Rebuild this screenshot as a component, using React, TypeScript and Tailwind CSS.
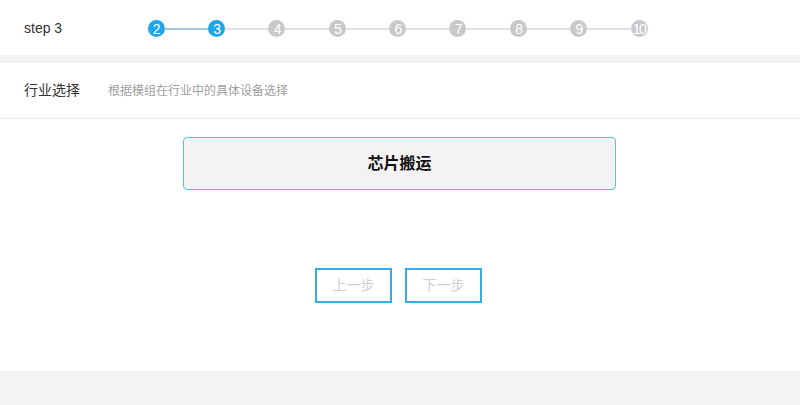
import React from "react";

const steps = ["2", "3", "4", "5", "6", "7", "8", "9", "10"];

export default function App() {
  return (
    <div
      className="w-[800px] h-[405px] bg-[#f3f3f3] flex flex-col"
      style={{ fontFamily: '"Liberation Sans", "Noto Sans CJK SC", sans-serif' }}
    >
      <div className="h-[55px] bg-white flex items-center shrink-0">
        <div className="w-[147.5px] pl-[24px] text-[14px] text-[#333] pt-[1px]">step 3</div>
        <div className="flex items-center pt-[2px]">
          {steps.map((s, i) => {
            const active = i < 2;
            return (
              <React.Fragment key={s}>
                {i > 0 && (
                  <div
                    className={
                      i === 1
                        ? "w-[43.4px] h-[2px] bg-[#9fcbd6]"
                        : "w-[43.4px] h-[2px] bg-[#e0e0e0]"
                    }
                  />
                )}
                <div
                  className={
                    (active ? "bg-[#1ea6ea] " : "bg-[#c9c9c9] ") +
                    "w-[17px] h-[17px] rounded-full flex items-center justify-center text-white text-[14px] leading-none tracking-[-1.5px]"
                  }
                >
                  {s}
                </div>
              </React.Fragment>
            );
          })}
        </div>
      </div>
      <div className="mt-[8px] bg-white h-[308px] flex flex-col shrink-0">
        <div className="h-[56px] border-b border-[#ececec] flex items-center px-[24px] shrink-0">
          <span className="text-[14px] text-[#333]">行业选择</span>
          <span className="ml-[28px] text-[12px] text-[#a0a0a0]">根据模组在行业中的具体设备选择</span>
        </div>
        <div className="mt-[18px] ml-[183px] w-[433px] h-[53px] border border-[#5cc0e6] rounded-[4px] bg-[#f3f3f3] flex items-center justify-center">
          <span className="text-[16px] font-bold text-[#111]">芯片搬运</span>
        </div>
        <div className="mt-[78px] flex gap-[13px] pl-[315px]">
          <div className="w-[77px] h-[35px] border-2 border-[#36ace8] flex items-center justify-center text-[14px] text-[#cfcfcf]">
            上一步
          </div>
          <div className="w-[77px] h-[35px] border-2 border-[#36ace8] flex items-center justify-center text-[14px] text-[#cfcfcf]">
            下一步
          </div>
        </div>
      </div>
    </div>
  );
}
